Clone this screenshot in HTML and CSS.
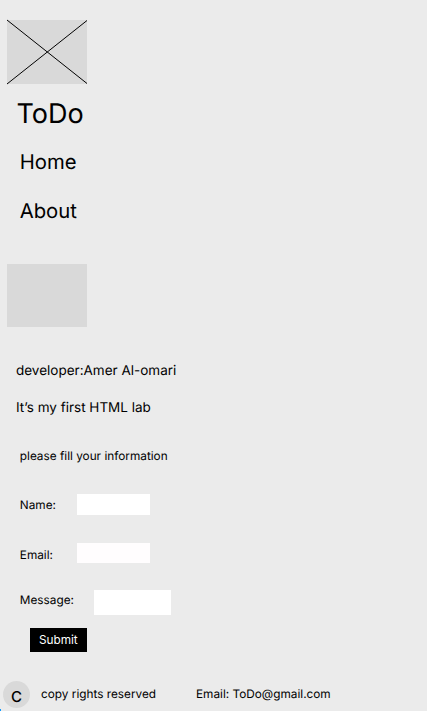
FILE: index.html
```html
<!DOCTYPE html>
<html lang="en">
<head>
<meta charset="utf-8">
<title>ToDo</title>
<link rel="stylesheet" href="styles.css">
</head>
<body>
<header class="header">
  <svg class="logo" viewBox="0 0 80 64" aria-hidden="true"><path d="M0 0L80 63.5M0 64L80 .5"/></svg>
  <h1 class="title">ToDo</h1>
  <nav class="nav"><a class="link">Home</a><a class="link">About</a></nav>
</header>
<main>
  <div class="image"></div>
  <p class="intro">developer:Amer Al-omari</p>
  <p class="intro lab">It’s my first HTML lab</p>
  <form class="form">
    <p class="hint">please fill your information</p>
    <div class="field name"><label for="name">Name:</label><input id="name" class="input"></div>
    <div class="field email"><label for="email">Email:</label><input id="email" class="input"></div>
    <div class="field message"><label for="message">Message:</label><input id="message" class="input large"></div>
    <button class="submit" type="button">Submit</button>
  </form>
</main>
<footer class="footer">
  <span class="badge">C</span>
  <span class="rights">copy rights reserved</span>
  <span class="contact">Email: ToDo@gmail.com</span>
  <i class="corner"></i>
</footer>
</body>
</html>
```
FILE: styles.css
```css
* { box-sizing: border-box; }
body {
  margin: 0;
  height: 711px;
  overflow: hidden;
  background: #ebebeb;
  color: #000;
  font: 11.8px/20px Inter, "Liberation Sans", sans-serif;
  text-rendering: geometricPrecision;
}
h1, p { margin: 0; font-weight: 400; }
.header { padding-top: 20px; }
.logo {
  display: block;
  width: 80px;
  height: 64px;
  margin-left: 7px;
  overflow: visible;
  background: #d9d9d9;
}
.logo path { fill: none; stroke: #000; stroke-width: 1; }
.title { margin: 13px 0 0 16.4px; font-size: 27px; line-height: 34px; }
.nav { display: flex; flex-direction: column; gap: 21px; margin: 17px 0 0 19.7px; }
.link { font-size: 20.3px; line-height: 28px; }
.image { width: 80px; height: 63px; margin: 39px 0 0 7px; background: #d9d9d9; }
.intro { margin: 34px 0 0 16px; font-size: 13.5px; line-height: 20px; }
.lab { margin-top: 17px; }
.form { margin: 28px 0 0 19.8px; }
.field { display: flex; }
.name { margin-top: 28px; height: 22px; }
.email { margin-top: 27px; height: 22px; }
.message { margin-top: 25px; }
.field label { width: 57px; line-height: 22px; }
.email label { line-height: 24px; }
.message label { width: 74px; line-height: 20px; }
.input { width: 73px; height: 21px; padding: 0; border: 0; background: #fff; }
.email .input { height: 20px; background: #fffdfe; }
.message .large { width: 77px; height: 25px; }
.submit {
  display: block;
  width: 57px;
  height: 24px;
  margin: 13px 0 0 10px;
  padding: 0;
  border: 0;
  background: #000;
  color: #fff;
  font: inherit;
}
.footer { position: relative; display: flex; align-items: center; height: 30px; margin-top: 27px; padding-left: 3px; }
.badge { width: 27px; height: 27px; border-radius: 50%; background: #d9d9d9; font-size: 15px; font-weight: 500; line-height: 32px; text-align: center; }
.rights { width: 155px; margin-left: 11px; }
.corner { position: absolute; left: 0; bottom: -2px; width: 1px; height: 2px; background: #0d99ff; }
```
